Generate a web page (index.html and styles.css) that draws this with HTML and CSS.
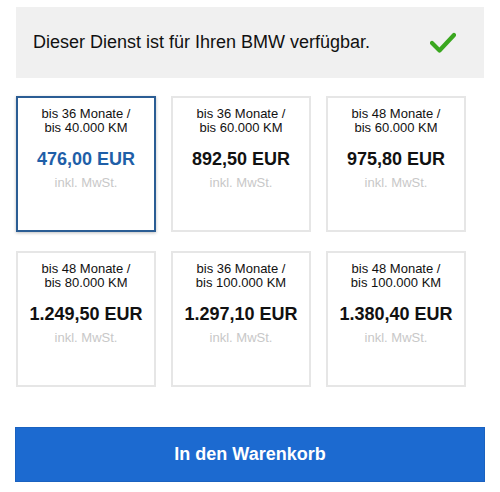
FILE: index.html
```html
<!DOCTYPE html>
<html lang="de">
<head>
    <meta charset="UTF-8">
    <meta name="viewport" content="width=device-width, initial-scale=1.0">
    <title>Service Paket</title>
    <link rel="stylesheet" href="styles.css">
</head>
<body>

    <div class="page">
        <!-- Availability -->
        <div class="notice">
            <span>Dieser Dienst ist für Ihren BMW verfügbar.</span>
            <svg class="check" width="26" height="22" viewBox="0 0 26 22">
                <path d="M2 11 L9.5 18.5 L24 3" fill="none" stroke="#3aa71f" stroke-width="4.2" stroke-linecap="round" stroke-linejoin="round"/>
            </svg>
        </div>

        <!-- Packages -->
        <div class="packages">
            <div class="package selected">
                <div class="term">bis 36 Monate /<br>bis 40.000 KM</div>
                <div class="price">476,00 EUR</div>
                <div class="tax">inkl. MwSt.</div>
            </div>
            <div class="package">
                <div class="term">bis 36 Monate /<br>bis 60.000 KM</div>
                <div class="price">892,50 EUR</div>
                <div class="tax">inkl. MwSt.</div>
            </div>
            <div class="package">
                <div class="term">bis 48 Monate /<br>bis 60.000 KM</div>
                <div class="price">975,80 EUR</div>
                <div class="tax">inkl. MwSt.</div>
            </div>
            <div class="package">
                <div class="term">bis 48 Monate /<br>bis 80.000 KM</div>
                <div class="price">1.249,50 EUR</div>
                <div class="tax">inkl. MwSt.</div>
            </div>
            <div class="package">
                <div class="term">bis 36 Monate /<br>bis 100.000 KM</div>
                <div class="price">1.297,10 EUR</div>
                <div class="tax">inkl. MwSt.</div>
            </div>
            <div class="package">
                <div class="term">bis 48 Monate /<br>bis 100.000 KM</div>
                <div class="price">1.380,40 EUR</div>
                <div class="tax">inkl. MwSt.</div>
            </div>
        </div>

        <!-- Cart -->
        <button class="cart-button" type="button">In den Warenkorb</button>
    </div>

</body>
</html>
```

FILE: styles.css
```css
body {
    margin: 0;
    font-family: "Liberation Sans", Arial, sans-serif;
    color: #111;
    background: #fff;
}

.page {
    padding: 7px 15px;
}

.notice {
    display: flex;
    align-items: center;
    justify-content: space-between;
    height: 71px;
    margin: 0 1px;
    padding: 0 28px 0 17px;
    background-color: #f0f0f0;
    font-size: 18px;
}

.check {
    display: block;
}

.packages {
    display: grid;
    grid-template-columns: repeat(3, 140px);
    column-gap: 15px;
    row-gap: 19px;
    margin: 18px 0 0 1px;
}

.package {
    box-sizing: border-box;
    height: 136px;
    padding: 9px 4px;
    border: 2px solid #e6e6e6;
    text-align: center;
}

.package.selected {
    border-color: #2b5d94;
    box-shadow: 0 1px 3px rgba(0, 0, 0, 0.25);
}

.term {
    font-size: 13px;
    line-height: 14px;
}

.price {
    margin-top: 14px;
    font-size: 18px;
    font-weight: bold;
}

.selected .price {
    color: #1f5fa8;
}

.tax {
    margin-top: 5px;
    font-size: 13px;
    color: #c8c8c8;
}

.cart-button {
    display: block;
    width: 100%;
    height: 55px;
    margin-top: 40px;
    border: 1px solid #1a62c0;
    background-color: #1c6ad0;
    color: #fff;
    font-family: inherit;
    font-size: 18px;
    font-weight: bold;
    cursor: pointer;
}
```
